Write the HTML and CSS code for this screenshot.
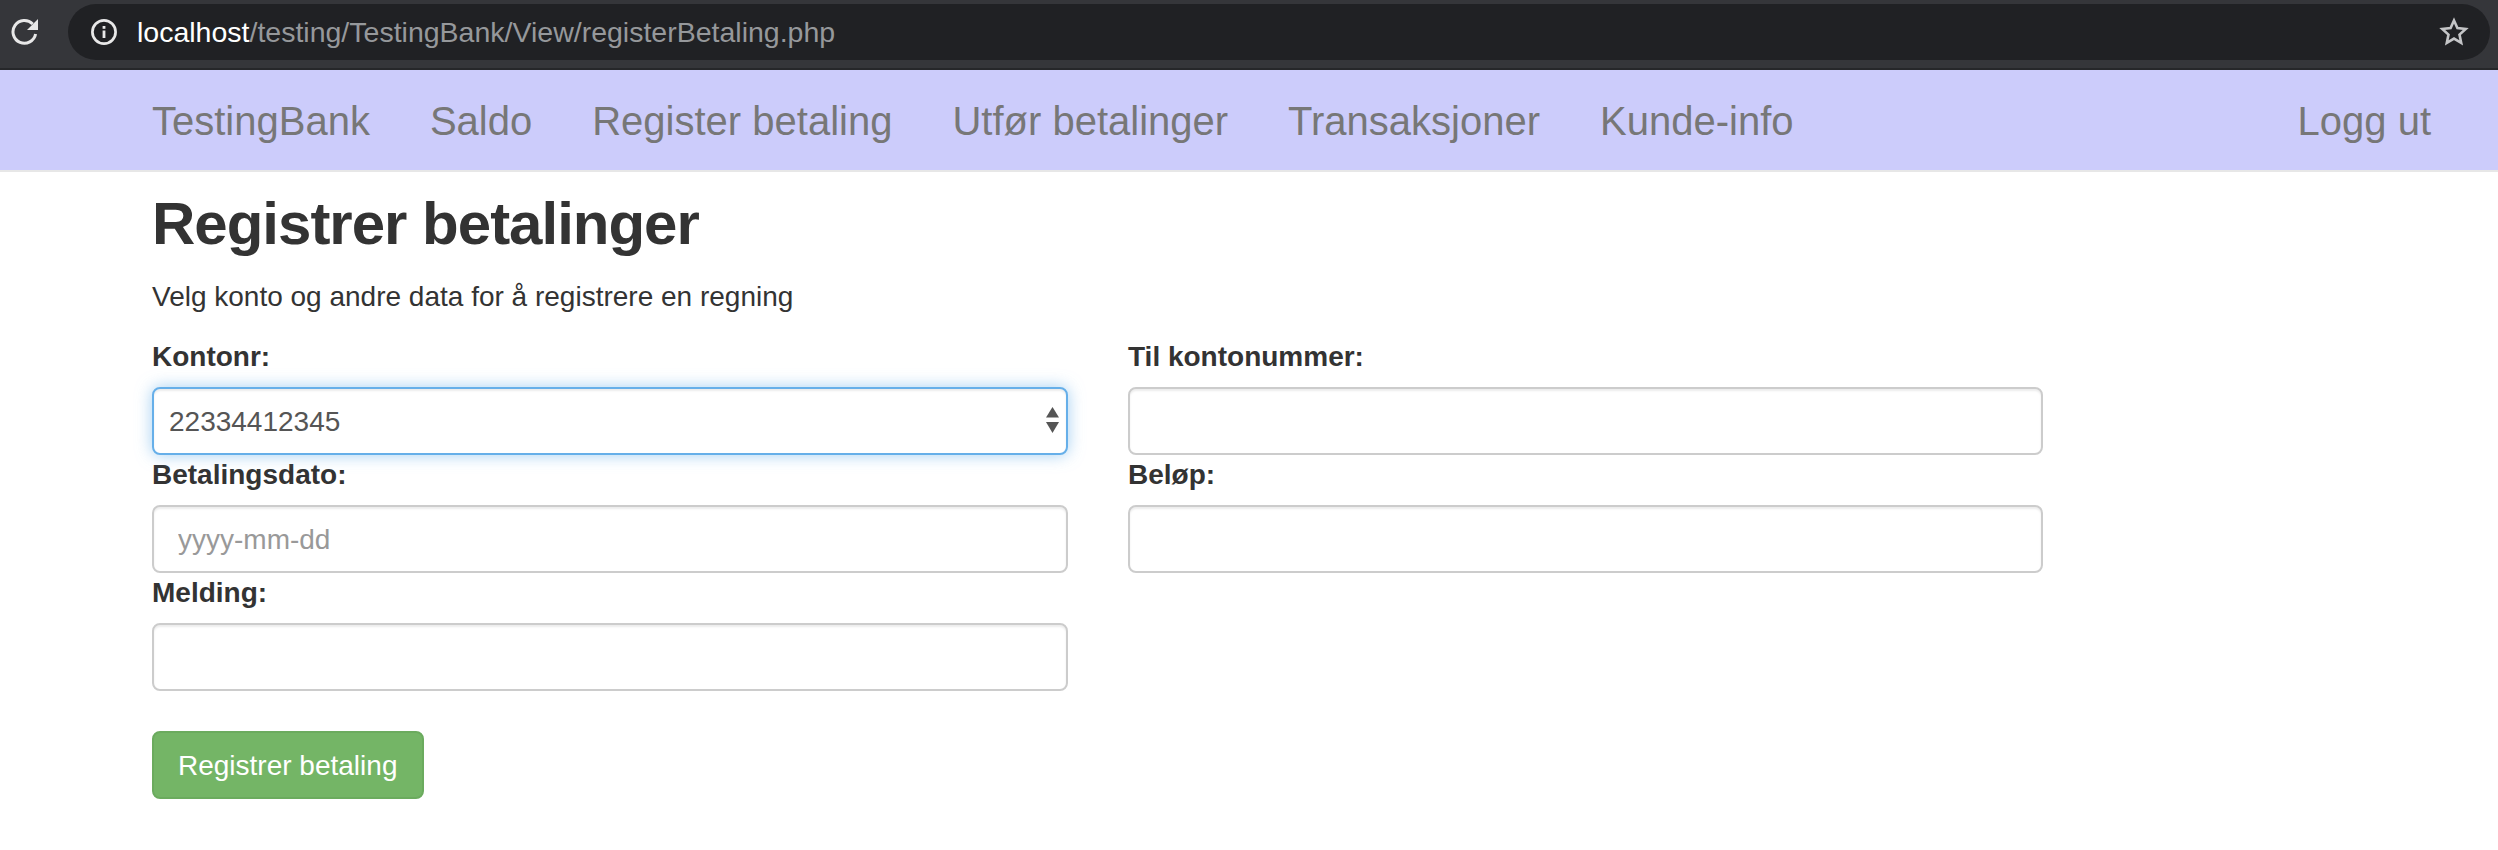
FILE: index.html
```html
<!DOCTYPE html>
<html lang="en">
<head>
  <meta charset="UTF-8">
  <title>Registrer betalinger</title>
  <link rel="stylesheet" href="styles.css">
</head>
<body>
  <div class="browser-bar">
    <svg class="reload-icon" viewBox="0 0 28 28" width="28" height="28">
      <path d="M24.6 16A11.4 11.4 0 1 1 21.7 6" fill="none" stroke="#e8e8e8" stroke-width="3"/>
      <path d="M27 1v11H16z" fill="#e8e8e8"/>
    </svg>
    <div class="url-pill">
      <svg class="info-icon" viewBox="0 0 26 26" width="26" height="26">
        <circle cx="13" cy="13" r="11.6" fill="none" stroke="#e8e8e8" stroke-width="2.7"/>
        <rect x="11.6" y="11.5" width="2.8" height="7.5" fill="#e8e8e8"/>
        <rect x="11.6" y="7" width="2.8" height="2.8" fill="#e8e8e8"/>
      </svg>
      <span class="url-text"><span class="url-host">localhost</span>/testing/TestingBank/View/registerBetaling.php</span>
      <svg class="star-icon" viewBox="0 0 30 30" width="30" height="30">
        <path d="M15 3.5l3.4 7.6 8.3.9-6.2 5.6 1.7 8.2-7.2-4.2-7.2 4.2 1.7-8.2-6.2-5.6 8.3-.9z" fill="none" stroke="#c4c5c7" stroke-width="2.6"/>
      </svg>
    </div>
  </div>

  <nav class="navbar">
    <a class="nav-link" href="#">TestingBank</a>
    <a class="nav-link" href="#">Saldo</a>
    <a class="nav-link" href="#">Register betaling</a>
    <a class="nav-link" href="#">Utfør betalinger</a>
    <a class="nav-link" href="#">Transaksjoner</a>
    <a class="nav-link" href="#">Kunde-info</a>
    <a class="nav-link nav-right" href="#">Logg ut</a>
  </nav>

  <main class="content">
    <h1>Registrer betalinger</h1>
    <p class="intro">Velg konto og andre data for å registrere en regning</p>
    <form class="pay-form">
      <div class="field">
        <label for="konto">Kontonr:</label>
        <div class="select-wrap">
          <select id="konto" class="form-input is-focused">
            <option>22334412345</option>
          </select>
          <svg class="select-arrows" viewBox="0 0 13 26" width="13" height="26">
            <path d="M6.5 0L13 10.5H0z" fill="#555"/>
            <path d="M6.5 26L13 15H0z" fill="#555"/>
          </svg>
        </div>
      </div>
      <div class="field">
        <label for="til">Til kontonummer:</label>
        <input id="til" class="form-input" type="text">
      </div>
      <div class="field">
        <label for="dato">Betalingsdato:</label>
        <input id="dato" class="form-input" type="text" placeholder="yyyy-mm-dd">
      </div>
      <div class="field">
        <label for="belop">Beløp:</label>
        <input id="belop" class="form-input" type="text">
      </div>
      <div class="field">
        <label for="melding">Melding:</label>
        <input id="melding" class="form-input" type="text">
      </div>
    </form>
    <button class="btn-submit" type="button">Registrer betaling</button>
  </main>
</body>
</html>
```

FILE: styles.css
```css
* {
  box-sizing: border-box;
}

body {
  margin: 0;
  background: #fff;
  color: #333;
  font-family: "Liberation Sans", Arial, sans-serif;
  font-size: 28px;
  line-height: 40px;
}

/* browser chrome */
.browser-bar {
  display: flex;
  align-items: flex-start;
  height: 70px;
  padding: 4px 8px 0 11px;
  background: #35363a;
  border-bottom: 2px solid #26272a;
}

.reload-icon {
  margin: 14px 29px 0 0;
  flex: none;
}

.url-pill {
  flex: 1;
  display: flex;
  align-items: center;
  height: 56px;
  padding: 0 21px 0 23px;
  background: #202124;
  border-radius: 28px;
}

.info-icon {
  flex: none;
  margin-right: 20px;
}

.url-text {
  color: #96989b;
  font-size: 28.5px;
  white-space: nowrap;
}

.url-host {
  color: #fff;
}

.star-icon {
  flex: none;
  margin-left: auto;
}

/* navbar */
.navbar {
  display: flex;
  align-items: center;
  height: 102px;
  padding: 2px 67px 0 122px;
  background: #ccccfb;
  border-bottom: 2px solid #e7e7e7;
}

.nav-link {
  padding: 0 30px;
  color: #777;
  font-size: 40px;
  text-decoration: none;
}

.nav-right {
  margin-left: auto;
  padding-right: 0;
}

/* page */
.content {
  padding: 19px 0 0 152px;
}

h1 {
  margin: 0 0 20px;
  font-size: 60px;
  font-weight: bold;
  letter-spacing: -1px;
  line-height: 66px;
  color: #333;
}

.intro {
  margin: 0 0 20px;
  color: #333;
}

.pay-form {
  display: grid;
  grid-template-columns: 916px 915px;
  column-gap: 60px;
}

label {
  display: block;
  margin-bottom: 10px;
  font-weight: bold;
}

.form-input {
  display: block;
  width: 100%;
  height: 68px;
  padding: 2px 24px 0;
  background: #fff;
  border: 2px solid #ccc;
  border-radius: 8px;
  box-shadow: inset 0 2px 2px rgba(0, 0, 0, 0.075);
  color: #555;
  font-family: inherit;
  font-size: 28px;
}

.form-input::placeholder {
  color: #999;
  opacity: 1;
}

select.form-input {
  appearance: none;
  padding: 0 24px 0 15px;
}

.form-input.is-focused {
  border-color: #66afe9;
  box-shadow: inset 0 2px 2px rgba(0, 0, 0, 0.075), 0 0 16px rgba(102, 175, 233, 0.6);
}

.select-wrap {
  position: relative;
}

.select-arrows {
  position: absolute;
  top: 20px;
  right: 9px;
}

.btn-submit {
  display: block;
  height: 68px;
  margin-top: 40px;
  padding: 2px 25px 0 24px;
  background: #74b566;
  border: 2px solid #6bab5e;
  border-radius: 8px;
  color: #fff;
  font-family: inherit;
  font-size: 28px;
}
```
